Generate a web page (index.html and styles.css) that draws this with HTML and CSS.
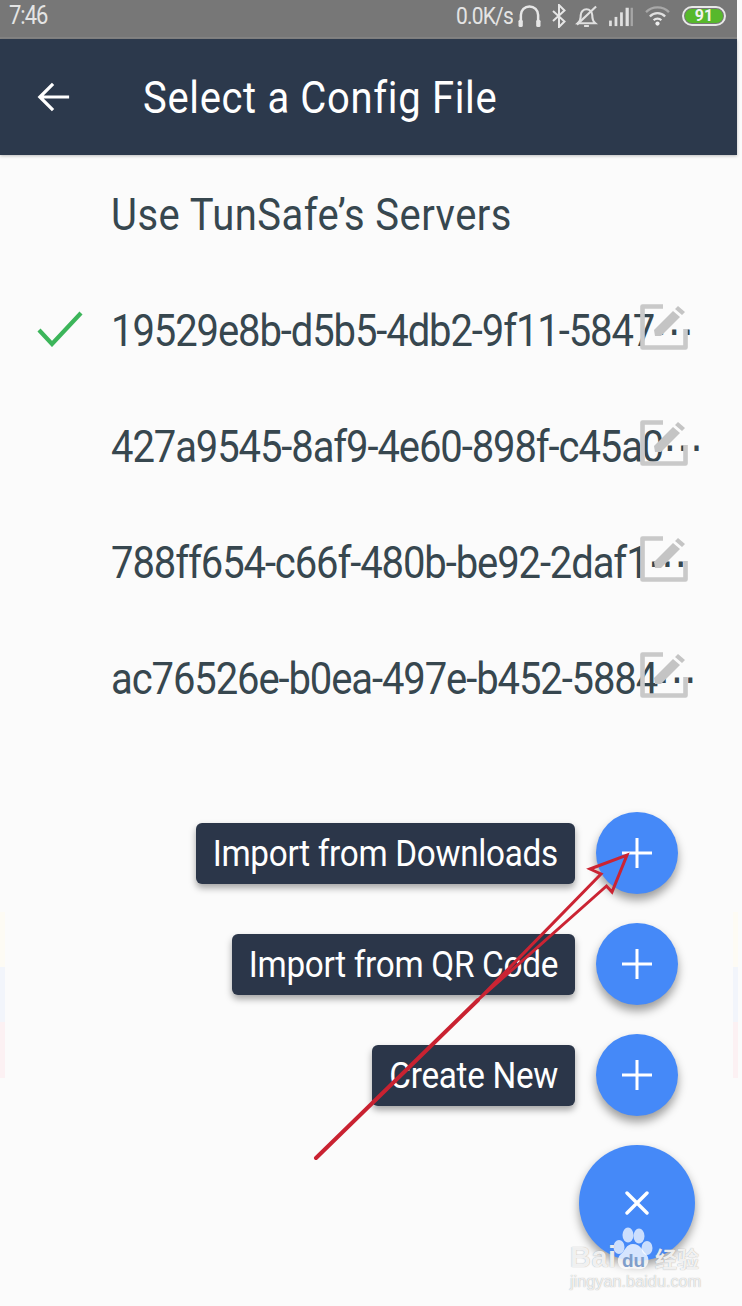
FILE: index.html
```html
<!DOCTYPE html>
<html lang="en">
<head>
<meta charset="utf-8">
<title>Select a Config File</title>
<link rel="stylesheet" href="styles.css">
</head>
<body>
<div class="page">
  <div class="status">
    <span class="time">7:46</span>
    <div class="status-right">
      <span class="speed">0.0K/s</span>
      <svg class="si si-head" viewBox="0 0 24 24"><path d="M3 20V11a9 9 0 0 1 18 0v9" fill="none" stroke="#e6e6e6" stroke-width="2.600"/><rect x=".5" y="16" width="4.500" height="7.500" rx="1.600" fill="#e6e6e6"/><rect x="19" y="16" width="4.500" height="7.500" rx="1.600" fill="#e6e6e6"/></svg>
      <svg class="si si-bt" viewBox="0 0 14 24"><path d="M1 7l11.500 10.500L7 23V1l5.500 5.500L1 17" fill="none" stroke="#e6e6e6" stroke-width="2"/></svg>
      <svg class="si si-bell" viewBox="0 0 24 24"><path d="M3 19.500c2.500-2 3-4.500 3-8.500a6 6 0 0 1 12 0c0 4 .5 6.500 3 8.500z" fill="none" stroke="#e0e0e0" stroke-width="2.200"/><path d="M9.500 22.500h5M2 21L22 2" fill="none" stroke="#e0e0e0" stroke-width="2.200"/></svg>
      <svg class="si si-signal" viewBox="0 0 26 24"><rect x="0" y="17" width="3" height="6" fill="#e0e0e0"/><rect x="6" y="13" width="3" height="10" fill="#e0e0e0"/><rect x="12" y="8" width="3" height="15" fill="#e0e0e0"/><rect x="18" y="3" width="3.500" height="20" fill="#e0e0e0"/><rect x="23.500" y="3" width="2.500" height="20" fill="#e0e0e0" opacity=".45"/></svg>
      <svg class="si si-wifi" viewBox="0 0 26 22"><path d="M1 7.500a17 17 0 0 1 24 0" fill="none" stroke="#a8a8a8" stroke-width="2.400"/><path d="M5 12a11 11 0 0 1 16 0" fill="none" stroke="#e0e0e0" stroke-width="2.400"/><path d="M9 16a5.500 5.500 0 0 1 8 0" fill="none" stroke="#e6e6e6" stroke-width="2.400"/><circle cx="13" cy="19.500" r="2.200" fill="#eee"/></svg>
      <span class="battery"><span class="battery-level">91</span></span>
    </div>
  </div>

  <header class="toolbar">
    <svg class="back" viewBox="0 0 36 32"><path d="M34 16H3M17 2L3 16l14 14" fill="none" stroke="#fff" stroke-width="3.400"/></svg>
    <h1 class="title"><span class="tall">Select a Config File</span></h1>
  </header>

  <main class="list">
    <div class="row"><span class="name"><span class="tall">Use TunSafe’s Servers</span></span></div>
    <div class="row">
      <svg class="check" viewBox="0 0 46 36"><path d="M2 19l13 14L44 2" fill="none" stroke="#3cb55a" stroke-width="4.200"/></svg>
      <span class="name uuid"><span class="tall">19529e8b-d5b5-4db2-9f11-5847⋯</span></span>
      <svg class="edit" viewBox="0 0 48 46"><path d="M23 2.500H2.500v41h43V25" fill="none" stroke="#c9c9c9" stroke-width="4.600" stroke-linejoin="round"/><path d="M15 32l-1-6L33 7l7 6-19 19zM35 5l3-3 7 6-3 3z" fill="#c4c4c4"/></svg>
    </div>
    <div class="row">
      <span class="name uuid"><span class="tall">427a9545-8af9-4e60-898f-c45a0⋯</span></span>
      <svg class="edit" viewBox="0 0 48 46"><path d="M23 2.500H2.500v41h43V25" fill="none" stroke="#c9c9c9" stroke-width="4.600" stroke-linejoin="round"/><path d="M15 32l-1-6L33 7l7 6-19 19zM35 5l3-3 7 6-3 3z" fill="#c4c4c4"/></svg>
    </div>
    <div class="row">
      <span class="name uuid"><span class="tall">788ff654-c66f-480b-be92-2daf1⋯</span></span>
      <svg class="edit" viewBox="0 0 48 46"><path d="M23 2.500H2.500v41h43V25" fill="none" stroke="#c9c9c9" stroke-width="4.600" stroke-linejoin="round"/><path d="M15 32l-1-6L33 7l7 6-19 19zM35 5l3-3 7 6-3 3z" fill="#c4c4c4"/></svg>
    </div>
    <div class="row">
      <span class="name uuid"><span class="tall">ac76526e-b0ea-497e-b452-5884⋯</span></span>
      <svg class="edit" viewBox="0 0 48 46"><path d="M23 2.500H2.500v41h43V25" fill="none" stroke="#c9c9c9" stroke-width="4.600" stroke-linejoin="round"/><path d="M15 32l-1-6L33 7l7 6-19 19zM35 5l3-3 7 6-3 3z" fill="#c4c4c4"/></svg>
    </div>
  </main>

  <section class="actions">
    <div class="action">
      <span class="label"><span class="tall-label">Import from Downloads</span></span>
      <span class="fab"><svg class="plus" viewBox="0 0 30 30"><path d="M15 0v30M0 15h30" stroke="#fff" stroke-width="3"/></svg></span>
    </div>
    <div class="action">
      <span class="label"><span class="tall-label">Import from QR Code</span></span>
      <span class="fab"><svg class="plus" viewBox="0 0 30 30"><path d="M15 0v30M0 15h30" stroke="#fff" stroke-width="3"/></svg></span>
    </div>
    <div class="action">
      <span class="label"><span class="tall-label">Create New</span></span>
      <span class="fab"><svg class="plus" viewBox="0 0 30 30"><path d="M15 0v30M0 15h30" stroke="#fff" stroke-width="3"/></svg></span>
    </div>
    <div class="main-fab"><svg class="close" viewBox="0 0 24 24"><path d="M2 2l20 20M22 2L2 22" stroke="#fff" stroke-width="3.400" stroke-linecap="round"/></svg></div>
  </section>

  <div class="edge edge-left"></div>
  <div class="edge edge-right"></div>

  <svg class="arrow" viewBox="0 0 742 1306">
    <path d="M478 1000L601 874 590 869 627 855 612 892 606.500 886 478 1000" fill="none" stroke="#cb2433" stroke-width="3" stroke-linejoin="miter"/>
    <path d="M316 1158L478 1000" fill="none" stroke="#c92231" stroke-width="4" stroke-linecap="round"/>
  </svg>

  <div class="watermark">
    <svg class="paw" viewBox="0 0 60 50">
      <ellipse cx="10" cy="21" rx="5.500" ry="7" fill="#fff" fill-opacity=".72"/>
      <ellipse cx="19" cy="9" rx="5.500" ry="7.500" fill="#fff" fill-opacity=".72"/>
      <ellipse cx="30" cy="10" rx="5.500" ry="7.500" fill="#fff" fill-opacity=".72"/>
      <ellipse cx="38" cy="22" rx="5.500" ry="7" fill="#fff" fill-opacity=".72"/>
      <path d="M24 18c7 0 9 6 13 10 5 5 2 16-7 15-4-.5-8-1-12 0-9 1-12-10-6-15 4-3 5-10 12-10z" fill="#fff" fill-opacity=".78"/>
    </svg>
    <div class="wm-top"><span class="wm-bai">Bai</span><span class="wm-du">du</span><span class="wm-cn">经验</span></div>
    <div class="wm-url">jingyan.baidu.com</div>
  </div>
</div>
</body>
</html>
```
FILE: styles.css
```css
* { box-sizing: border-box; }
html, body { margin: 0; padding: 0; }
body {
  background: #fbfbfb;
  font-family: Roboto, "DejaVu Sans", "Liberation Sans", sans-serif;
}
.page {
  position: relative;
  width: 742px;
  height: 1306px;
  overflow: hidden;
  background: #fbfbfb;
}
.status {
  width: 737px;
  height: 39px;
  background: #777777;
  border-bottom: 2px solid #848484;
  display: flex;
  align-items: center;
  justify-content: space-between;
  padding: 0 11px 6px 9px;
  color: #e4e4e4;
}
.time { font-size: 22px; letter-spacing: -1px; transform: scaleY(1.15); }
.status-right { display: flex; align-items: center; }
.speed { font-size: 21px; letter-spacing: -.8px; margin-right: 5px; transform: scaleY(1.1); }
.si { display: block; }
.si-head { width: 23px; height: 24px; margin-right: 11px; }
.si-bt { width: 14px; height: 24px; margin-right: 9px; }
.si-bell { width: 23px; height: 24px; margin-right: 10px; }
.si-signal { width: 26px; height: 22px; margin-right: 11px; }
.si-wifi { width: 25px; height: 21px; margin-right: 12px; }
.battery {
  width: 44px;
  height: 20px;
  border: 2.500px solid #e8e8e8;
  border-radius: 10px;
  padding: 1px;
  display: flex;
}
.battery-level {
  flex: 1;
  background: #57b82c;
  border-radius: 8px;
  color: #f2f2f2;
  font-size: 16px;
  font-weight: 700;
  line-height: 13px;
  text-align: center;
}
.toolbar {
  width: 737px;
  height: 116px;
  background: #2c394c;
  box-shadow: 0 1px 3px rgba(0, 0, 0, .25);
  display: flex;
  align-items: center;
}
.back { width: 34px; height: 32px; margin: 0 0 0 37px; display: block; }
.title {
  margin: 0 0 0 72px;
  font-size: 40px;
  font-weight: 400;
  color: #fff;
  letter-spacing: .65px;
}
.tall {
  display: inline-block;
  transform: scaleY(1.12);
  white-space: nowrap;
}
.list { display: flex; flex-direction: column; height: 580px; }
.row {
  position: relative;
  height: 116px;
  flex: none;
  display: flex;
  align-items: center;
  padding-left: 111px;
  padding-top: 3px;
}
.name {
  font-size: 40px;
  line-height: 46px;
  color: #37474f;
  letter-spacing: .45px;
  white-space: nowrap;
}
.uuid { letter-spacing: -1.1px; }
.check {
  position: absolute;
  left: 37px;
  top: 40px;
  width: 46px;
  height: 36px;
}
.edit {
  position: absolute;
  left: 640px;
  top: 33px;
  width: 48px;
  height: 46px;
}
.actions {
  width: 695px;
  padding-top: 77px;
  display: flex;
  flex-direction: column;
  align-items: flex-end;
}
.action {
  display: flex;
  align-items: center;
  height: 82px;
  margin-bottom: 29px;
  padding-right: 17px;
}
.label {
  height: 61px;
  background: #2b3649;
  border-radius: 6px;
  color: #fff;
  padding: 0 17px;
  display: flex;
  align-items: center;
  font-size: 33.300px;
  box-shadow: 0 4px 7px rgba(0, 0, 0, .35);
  margin-right: 21px;
}
.tall-label { display: inline-block; transform: scaleY(1.13); white-space: nowrap; letter-spacing: -.3px; }
.fab {
  width: 82px;
  height: 82px;
  border-radius: 50%;
  background: #4589f8;
  box-shadow: 0 6px 10px rgba(0, 0, 0, .38);
  display: flex;
  align-items: center;
  justify-content: center;
}
.plus { width: 30px; height: 30px; display: block; }
.main-fab {
  width: 116px;
  height: 116px;
  border-radius: 50%;
  background: #4589f8;
  box-shadow: 0 5px 10px rgba(0, 0, 0, .38);
  display: flex;
  align-items: center;
  justify-content: center;
}
.close { width: 24px; height: 24px; display: block; }
.edge {
  position: absolute;
  top: 912px;
  width: 5px;
  height: 166px;
  background: linear-gradient(#fdfbf4 0 33%, #f2f5fb 33% 66%, #fcf1f3 66%);
}
.edge-left { left: 0; }
.edge-right { left: 733px; }
.arrow {
  position: absolute;
  left: 0;
  top: 0;
  width: 742px;
  height: 1306px;
}
.watermark {
  position: absolute;
  left: 570px;
  top: 1226px;
  width: 135px;
  height: 66px;
}
.paw { position: absolute; left: 39px; top: 0; width: 60px; height: 50px; }
.wm-top {
  position: absolute;
  left: 0;
  top: 15px;
  display: flex;
  align-items: baseline;
  color: rgba(255, 255, 255, .85);
  text-shadow: 0 0 1px rgba(120, 120, 120, .7);
  white-space: nowrap;
}
.wm-bai { font-family: "Liberation Sans", sans-serif; font-size: 29px; font-weight: 700; letter-spacing: .5px; width: 52px; }
.wm-du { font-family: "Liberation Sans", sans-serif; font-size: 19px; font-weight: 700; color: #7f9ecb; text-shadow: none; width: 33px; }
.wm-cn { font-family: "Noto Sans CJK SC", sans-serif; font-size: 22px; font-weight: 700; }
.wm-url {
  position: absolute;
  left: 0;
  top: 46px;
  font-family: "Liberation Sans", sans-serif;
  font-size: 16.300px;
  color: rgba(255, 255, 255, .8);
  text-shadow: 0 0 1px rgba(120, 120, 120, .7);
  white-space: nowrap;
}
```
